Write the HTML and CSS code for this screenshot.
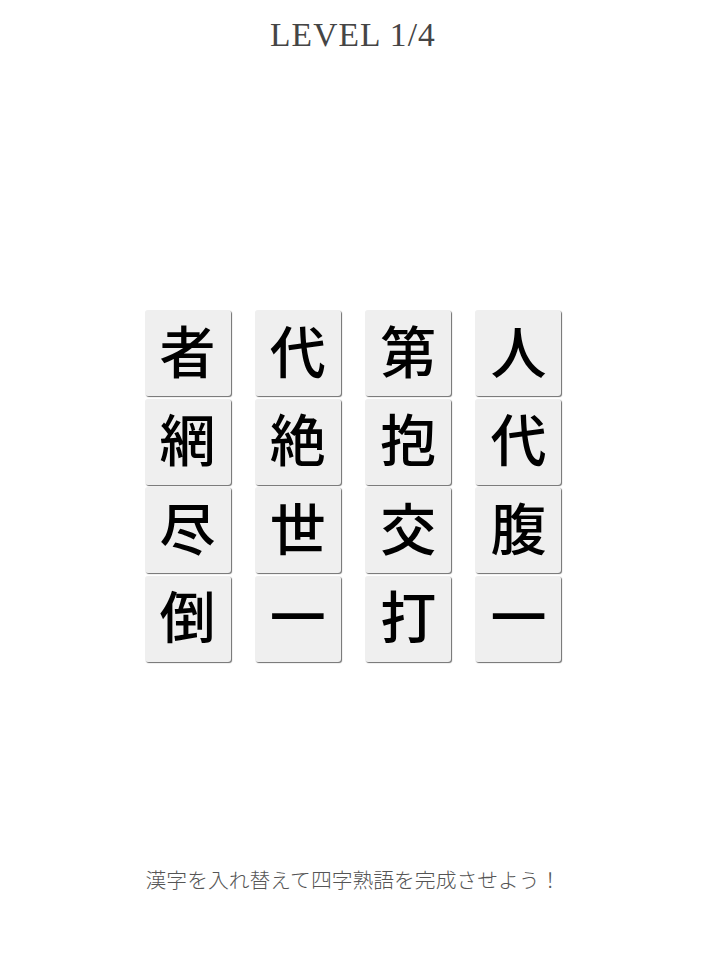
FILE: index.html
```html
<!DOCTYPE html>
<html lang="ja">
<head>
<meta charset="utf-8">
<title>LEVEL 1/4</title>
<link rel="stylesheet" href="styles.css">
</head>
<body>
<div class="page">
  <h1 class="level">LEVEL 1/4</h1>
  <div class="board">
    <div class="tile">者</div>
    <div class="tile">代</div>
    <div class="tile">第</div>
    <div class="tile">人</div>
    <div class="tile">網</div>
    <div class="tile">絶</div>
    <div class="tile">抱</div>
    <div class="tile">代</div>
    <div class="tile">尽</div>
    <div class="tile">世</div>
    <div class="tile">交</div>
    <div class="tile">腹</div>
    <div class="tile">倒</div>
    <div class="tile">一</div>
    <div class="tile">打</div>
    <div class="tile">一</div>
  </div>
  <p class="hint">漢字を入れ替えて四字熟語を完成させよう！</p>
</div>
</body>
</html>
```

FILE: styles.css
```css
html, body {
  margin: 0;
  padding: 0;
  background: #ffffff;
}

.page {
  width: 706px;
  min-height: 971px;
  display: flex;
  flex-direction: column;
  align-items: center;
}

.level {
  margin: 17px 0 0 0;
  font-family: "Liberation Serif", "Times New Roman", serif;
  font-weight: normal;
  font-size: 33.5px;
  letter-spacing: 1.1px;
  line-height: 36px;
  color: #454545;
}

.board {
  margin-top: 257px;
  display: grid;
  grid-template-columns: repeat(4, 86px);
  grid-auto-rows: 86px;
  column-gap: 24.3px;
  row-gap: 2.6px;
}

.tile {
  background: #efefef;
  border-radius: 3px;
  box-shadow: 1px 1px 1px #6e6e6e;
  display: flex;
  align-items: center;
  justify-content: center;
  padding-bottom: 9px;
  box-sizing: border-box;
  font-family: "Noto Sans CJK JP", "Noto Sans", sans-serif;
  font-weight: 500;
  font-size: 56px;
  line-height: 1;
  color: #000000;
}

.hint {
  margin: 203px 0 0 0;
  font-family: "Noto Sans CJK JP", "Noto Sans", sans-serif;
  font-weight: 300;
  font-size: 20.8px;
  line-height: 28px;
  color: #555555;
}
```
